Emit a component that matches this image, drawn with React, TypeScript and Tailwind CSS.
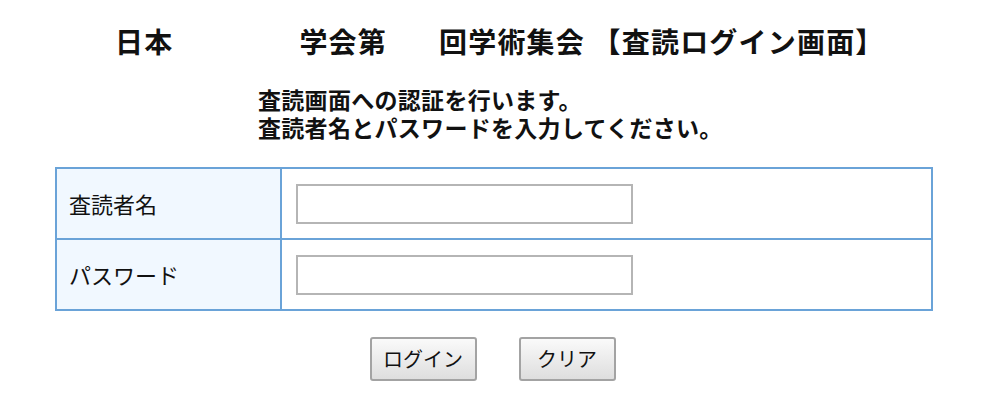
import React from "react";

const JP = "font-['Meiryo','Noto_Sans_CJK_JP',sans-serif]";

export default function App() {
  return (
    <div className={`min-h-[408px] w-[1000px] bg-white text-[#111] ${JP}`}>
      <div className="ml-[55px] flex w-[878px] flex-col">
        {/* title, the redacted parts are left blank */}
        <h1 className="mt-[22px] flex h-[38px] items-center whitespace-nowrap pl-[60px] text-[28px] font-bold leading-none tracking-[1.2px]">
          <span>日本</span>
          <span className="inline-block w-[126px]" />
          <span>学会第</span>
          <span className="inline-block w-[52px]" />
          <span>回学術集会 【査読ログイン画面】</span>
        </h1>

        <div className="mt-[25px] pl-[203px] text-[23px] font-bold leading-[28px] tracking-[0.3px]">
          <p>査読画面への認証を行います。</p>
          <p>査読者名とパスワードを入力してください。</p>
        </div>

        <table className="mt-[26px] w-full border-collapse border-2 border-[#6aa3d8]">
          <tbody>
            {["査読者名", "パスワード"].map((label, i) => (
              <tr key={label} className="h-[71px]">
                <th className="w-[225px] border-2 border-[#6aa3d8] bg-[#f1f8ff] pl-[12px] text-left text-[22px] font-normal">
                  {label}
                </th>
                <td className="border-2 border-[#6aa3d8] pl-[14px]">
                  <input
                    type={i === 1 ? "password" : "text"}
                    className="block h-[40px] w-[337px] border-2 border-[#b5b5b5] bg-white outline-none"
                  />
                </td>
              </tr>
            ))}
          </tbody>
        </table>

        <div className="mt-[26px] flex justify-center gap-[42px] pr-[3px]">
          <button
            type="button"
            className="box-border h-[44px] w-[107px] rounded-[3px] border-2 border-[#a3a3a3] bg-gradient-to-b from-[#fafafa] to-[#dedede] text-[20px]"
          >
            ログイン
          </button>
          <button
            type="button"
            className="box-border h-[44px] w-[97px] rounded-[3px] border-2 border-[#a3a3a3] bg-gradient-to-b from-[#fafafa] to-[#dedede] text-[20px]"
          >
            クリア
          </button>
        </div>
      </div>
    </div>
  );
}
